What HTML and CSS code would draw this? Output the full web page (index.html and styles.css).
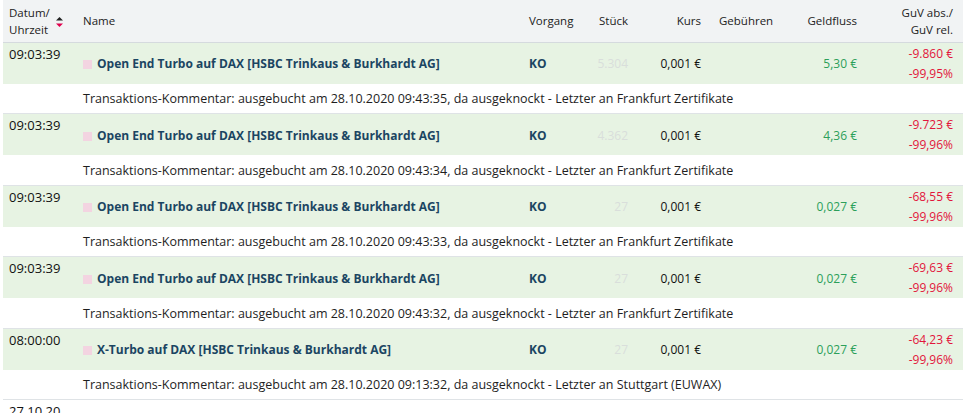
FILE: index.html
```html
<!DOCTYPE html>
<html lang="de">
<head>
<meta charset="utf-8">
<title>Transaktionen</title>
<link rel="stylesheet" href="styles.css">
</head>
<body>
<table class="tx">
  <colgroup>
    <col class="c-date"><col class="c-name"><col class="c-op"><col class="c-qty"><col class="c-kurs"><col class="c-fee"><col class="c-flow"><col class="c-guv">
  </colgroup>
  <thead>
    <tr class="head">
      <th class="date-h"><span class="two">Datum/<br>Uhrzeit</span><svg class="sort" width="7" height="10" viewBox="0 0 7 10"><path d="M3.5 0L7 3.5H0z" fill="#222"/><path d="M0 6.5H7L3.5 10z" fill="#e0004d"/></svg></th>
      <th>Name</th>
      <th>Vorgang</th>
      <th class="r">Stück</th>
      <th class="r">Kurs</th>
      <th class="fee">Gebühren</th>
      <th class="r">Geldfluss</th>
      <th class="r">GuV abs./<br>GuV rel.</th>
    </tr>
  </thead>
  <tbody>
    <tr class="main">
      <td class="time">09:03:39</td>
      <td class="name"><span class="dot"></span>Open End Turbo auf DAX [HSBC Trinkaus &amp; Burkhardt AG]</td>
      <td class="op">KO</td>
      <td class="r qty">5.304</td>
      <td class="r kurs">0,001 €</td>
      <td></td>
      <td class="r pos">5,30 €</td>
      <td class="r neg">-9.860 €<br>-99,95%</td>
    </tr>
    <tr class="comment"><td></td><td colspan="7">Transaktions-Kommentar: ausgebucht am 28.10.2020 09:43:35, da ausgeknockt - Letzter an Frankfurt Zertifikate</td></tr>
    <tr class="main">
      <td class="time">09:03:39</td>
      <td class="name"><span class="dot"></span>Open End Turbo auf DAX [HSBC Trinkaus &amp; Burkhardt AG]</td>
      <td class="op">KO</td>
      <td class="r qty">4.362</td>
      <td class="r kurs">0,001 €</td>
      <td></td>
      <td class="r pos">4,36 €</td>
      <td class="r neg">-9.723 €<br>-99,96%</td>
    </tr>
    <tr class="comment"><td></td><td colspan="7">Transaktions-Kommentar: ausgebucht am 28.10.2020 09:43:34, da ausgeknockt - Letzter an Frankfurt Zertifikate</td></tr>
    <tr class="main">
      <td class="time">09:03:39</td>
      <td class="name"><span class="dot"></span>Open End Turbo auf DAX [HSBC Trinkaus &amp; Burkhardt AG]</td>
      <td class="op">KO</td>
      <td class="r qty">27</td>
      <td class="r kurs">0,001 €</td>
      <td></td>
      <td class="r pos">0,027 €</td>
      <td class="r neg">-68,55 €<br>-99,96%</td>
    </tr>
    <tr class="comment"><td></td><td colspan="7">Transaktions-Kommentar: ausgebucht am 28.10.2020 09:43:33, da ausgeknockt - Letzter an Frankfurt Zertifikate</td></tr>
    <tr class="main">
      <td class="time">09:03:39</td>
      <td class="name"><span class="dot"></span>Open End Turbo auf DAX [HSBC Trinkaus &amp; Burkhardt AG]</td>
      <td class="op">KO</td>
      <td class="r qty">27</td>
      <td class="r kurs">0,001 €</td>
      <td></td>
      <td class="r pos">0,027 €</td>
      <td class="r neg">-69,63 €<br>-99,96%</td>
    </tr>
    <tr class="comment"><td></td><td colspan="7">Transaktions-Kommentar: ausgebucht am 28.10.2020 09:43:32, da ausgeknockt - Letzter an Frankfurt Zertifikate</td></tr>
    <tr class="main">
      <td class="time">08:00:00</td>
      <td class="name"><span class="dot"></span>X-Turbo auf DAX [HSBC Trinkaus &amp; Burkhardt AG]</td>
      <td class="op">KO</td>
      <td class="r qty">27</td>
      <td class="r kurs">0,001 €</td>
      <td></td>
      <td class="r pos">0,027 €</td>
      <td class="r neg">-64,23 €<br>-99,96%</td>
    </tr>
    <tr class="comment"><td></td><td colspan="7">Transaktions-Kommentar: ausgebucht am 28.10.2020 09:13:32, da ausgeknockt - Letzter an Stuttgart (EUWAX)</td></tr>
    <tr class="day"><td class="time">27.10.20</td><td colspan="7"></td></tr>
  </tbody>
</table>
</body>
</html>
```

FILE: styles.css
```css
html, body {
  margin: 0;
  padding: 0;
  background: #fff;
}
body {
  font-family: "Open Sans", "Noto Sans", sans-serif;
  font-size: 12px;
  color: #1e1e1e;
  padding: 0 6px 0 3px;
}
.tx {
  width: 960px;
  border-collapse: collapse;
  table-layout: fixed;
}
.c-date { width: 74px; }
.c-name { width: 446px; }
.c-op { width: 62px; }
.c-qty { width: 49px; }
.c-kurs { width: 73px; }
.c-fee { width: 80px; }
.c-flow { width: 76px; }
.c-guv { width: 100px; }

.tx th, .tx td {
  padding: 0 6px;
  text-align: left;
  white-space: nowrap;
}
.tx .r { text-align: right; }
.tx th:last-child, .tx td:last-child.r { padding-right: 10px; }

.head {
  background: #f1f3f4;
  height: 42px;
  border-bottom: 1px solid #d5dade;
}
.head th {
  font-weight: normal;
  font-size: 11.5px;
  color: #222;
  line-height: 17px;
  vertical-align: middle;
}
.head .fee { padding-left: 12px; }
.date-h .two { display: inline-block; vertical-align: middle; }
.sort { display: inline-block; vertical-align: middle; margin-left: 6px; position: relative; top: 1px; }

.main {
  background: #e7f3e3;
  height: 40px;
}
.main td {
  vertical-align: middle;
  line-height: 20px;
  padding-top: 2px;
}
.main .time {
  vertical-align: top;
  padding-top: 1px;
}
.time {
  font-size: 13px;
  color: #111;
}
.name {
  font-weight: bold;
  color: #1b4562;
}
.dot {
  display: inline-block;
  width: 9px;
  height: 9px;
  background: #f3d4e1;
  margin-right: 5px;
  vertical-align: -1px;
}
.op { font-weight: bold; color: #1b4562; }
.qty { color: #d9dedb; }
.kurs { color: #111; }
.pos { color: #2c9f5a; }
.neg { color: #e2153b; }
.main td.neg { padding-top: 1px; }

.comment {
  height: 30px;
  border-bottom: 1px solid #dfe3e6;
}
.comment td {
  vertical-align: middle;
  color: #1e1e1e;
  font-size: 12.5px;
  padding-top: 1px;
}
.day td {
  height: 18px;
  vertical-align: top;
  padding-top: 2px;
}
```
